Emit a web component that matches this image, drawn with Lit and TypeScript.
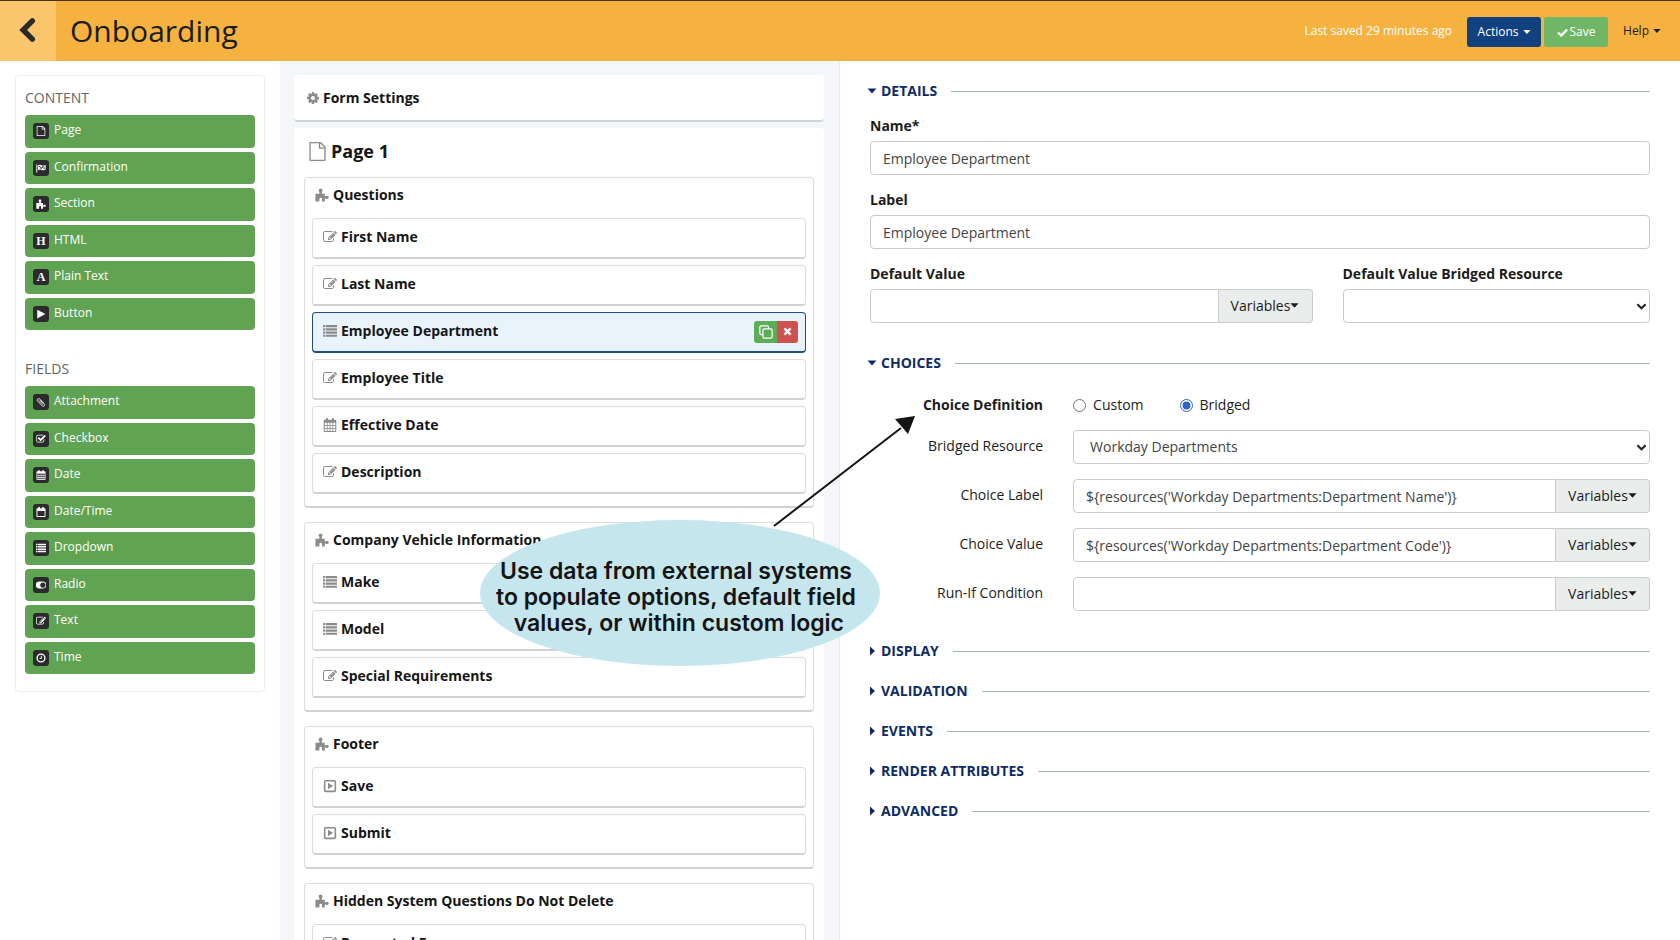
import { LitElement, html, svg, css } from "lit";
import { customElement, property, state } from "lit/decorators.js";
import { classMap } from "lit/directives/class-map.js";

/* Icon artwork: each entry is a viewBox size and its shapes. */
const ICONS: Record<string, { box: number; art: unknown }> = {
  file: {
    box: 1792,
    art: svg`<path d="M1596 380q28 28 48 76t20 88v1152q0 40-28 68t-68 28h-1344q-40 0-68-28t-28-68v-1600q0-40 28-68t68-28h896q40 0 88 20t76 48zm-444-244v376h376q-10-29-22-41l-313-313q-12-12-41-22zm384 1528v-1024h-416q-40 0-68-28t-28-68v-416h-768v1536h1280z"/>`,
  },
  edit: {
    box: 1792,
    art: svg`<path d="M888 1184l116-116-152-152-116 116v56h96v96h56zm440-720q-16-16-33 1l-350 350q-17 17-1 33t33-1l350-350q17-17 1-33zm80 594v190q0 119-84.5 203.5t-203.5 84.5h-832q-119 0-203.5-84.5t-84.5-203.5v-832q0-119 84.5-203.5t203.5-84.5h832q63 0 117 25 15 7 18 23 3 17-9 29l-49 49q-14 14-32 8-23-6-45-6h-832q-66 0-113 47t-47 113v832q0 66 47 113t113 47h832q66 0 113-47t47-113v-126q0-13 9-22l64-64q15-15 35-7t20 29zm-96-738l288 288-672 672h-288v-288zm444 132l-92 92-288-288 92-92q28-28 68-28t68 28l152 152q28 28 28 68t-28 68z"/>`,
  },
  checkbox: {
    box: 1792,
    art: svg`<path d="M1472 930v318q0 119-84.5 203.5t-203.5 84.5h-832q-119 0-203.5-84.5t-84.5-203.5v-832q0-119 84.5-203.5t203.5-84.5h832q63 0 117 25 15 7 18 23 3 17-9 29l-49 49q-10 10-23 10-3 0-9-2-23-6-45-6h-832q-66 0-113 47t-47 113v832q0 66 47 113t113 47h832q66 0 113-47t47-113v-254q0-13 9-22l64-64q10-10 23-10 6 0 12 3 20 8 20 29zm231-489l-814 814q-24 24-57 24t-57-24l-430-430q-24-24-24-57t24-57l110-110q24-24 57-24t57 24l263 263 647-647q24-24 57-24t57 24l110 110q24 24 24 57t-24 57z"/>`,
  },
  cog: {
    box: 1792,
    art: svg`<path d="M1152 896q0-106-75-181t-181-75-181 75-75 181 75 181 181 75 181-75 75-181zm512-109v222q0 12-8 23t-20 13l-185 28q-19 54-39 91 35 50 107 138 10 12 10 25t-9 23q-27 37-99 108t-94 71q-12 0-26-9l-138-108q-44 23-91 38-16 136-29 186-7 28-36 28h-222q-14 0-24.5-8.5t-11.5-21.5l-28-184q-49-16-90-37l-141 107q-10 9-25 9-14 0-25-11-126-114-165-168-7-10-7-23 0-12 8-23 15-21 51-66.5t54-70.5q-27-50-41-99l-183-27q-13-2-21-12.5t-8-23.5v-222q0-12 8-23t19-13l186-28q14-46 39-92-40-57-107-138-10-12-10-24 0-10 9-23 26-36 98.5-107.5t94.5-71.5q13 0 26 10l138 107q44-23 91-38 16-136 29-186 7-28 36-28h222q14 0 24.5 8.5t11.5 21.5l28 184q49 16 90 37l142-107q9-9 24-9 13 0 25 10 129 119 165 170 7 8 7 22 0 12-8 23-15 21-51 66.5t-54 70.5q26 50 41 98l183 28q13 2 21 12.5t8 23.5z"/>`,
  },
  puzzle: {
    box: 16,
    art: svg`<path d="M.500 6.500h4.500V4.300a2.100 2.100 0 1 1 2.800 0v2.200h3.400v3h1.300a1.800 1.800 0 1 1 0 2.400h-1.300V15.500H8v-2.900a1.500 1.500 0 0 0-3 0v2.900H.500z"/>`,
  },
  list: {
    box: 16,
    art: svg`<path d="M0 1.200h2.200v2.400H0zM3 1.200h13v2.400H3zM0 4.900h2.200v2.400H0zM3 4.900h13v2.400H3zM0 8.600h2.200V11H0zM3 8.600h13V11H3zM0 12.300h2.200v2.400H0zM3 12.300h13v2.400H3z"/>`,
  },
  calendar: {
    box: 16,
    art: svg`<path fill-rule="evenodd" d="M2 2h1.500V1.200a1.200 1.200 0 0 1 2.400 0V2h4.200V1.200a1.200 1.200 0 0 1 2.400 0V2H14a1.200 1.200 0 0 1 1.200 1.200v11.600A1.200 1.200 0 0 1 14 16H2a1.200 1.200 0 0 1-1.200-1.200V3.200A1.200 1.200 0 0 1 2 2zM2 5.500v2.400h2.300V5.500zm3.200 0v2.400h2.400V5.500zm3.300 0v2.400h2.300V5.500zm3.200 0v2.400H14V5.500zM2 8.800v2.500h2.300V8.800zm3.200 0v2.500h2.400V8.800zm3.300 0v2.500h2.300V8.800zm3.200 0v2.500H14V8.800zM2 12.200v2.600h2.300v-2.600zm3.200 0v2.600h2.400v-2.600zm3.300 0v2.600h2.300v-2.600zm3.200 0v2.600H14v-2.600z"/>`,
  },
  calendarBlank: {
    box: 16,
    art: svg`<path fill-rule="evenodd" d="M2 2h1.300V1.200a1.400 1.400 0 0 1 2.800 0V2h3.800V1.200a1.400 1.400 0 0 1 2.800 0V2H14a1.200 1.200 0 0 1 1.200 1.200v11.600A1.200 1.200 0 0 1 14 16H2a1.200 1.200 0 0 1-1.200-1.200V3.200A1.200 1.200 0 0 1 2 2zm.300 4.500v8h11.400v-8z"/>`,
  },
  flag: {
    box: 16,
    art: svg`<path d="M.500 2.500h1.500V15H.500z"/><path fill-rule="evenodd" d="M3 3.800c2.500-1.600 4.300-1.300 6.200-.200 2 1.100 3.600.800 6.300-.600v7.500c-2.700 1.500-4.500 1.600-6.500.500C7.200 10 5.500 10 3 11.500zM4.500 5v1.900c.900-.400 1.700-.600 2.500-.600V4.200c-.800 0-1.600.300-2.500.800zM7 6.300v2.300c1 0 1.800.300 2.600.800V7.100C8.700 6.600 7.900 6.300 7 6.300zm2.600-1.200v2c.900.400 1.800.400 2.600.200V5.200c-.900.200-1.700.200-2.600-.100zm2.600 2.200v2.300c.6-.1 1.200-.3 1.900-.6V6.700c-.7.300-1.300.500-1.900.6z"/>`,
  },
  play: { box: 16, art: svg`<path d="M2 1v14L15 8z"/>` },
  playBox: {
    box: 16,
    art: svg`<path fill-rule="evenodd" d="M3 1h10a2 2 0 0 1 2 2v10a2 2 0 0 1-2 2H3a2 2 0 0 1-2-2V3a2 2 0 0 1 2-2zm-.200 1.800v10.400h10.400V2.800z"/><path d="M5.700 4.300v7.400L11.500 8z"/>`,
  },
  clip: {
    box: 16,
    art: svg`<path fill="none" stroke="currentColor" stroke-width="1.400" stroke-linecap="round" d="M11.800 9.500 6.600 3.700C5.300 2.300 3.600 2.300 2.700 3.200s-.9 2.500.4 3.900l6.700 7c1 1 2.400 1.100 3.300.3s.9-2.300 0-3.300L7.200 5.400"/><path fill="none" stroke="currentColor" stroke-width="1.200" stroke-linecap="round" d="M5 5.800l5.600 6"/>`,
  },
  toggle: {
    box: 16,
    art: svg`<path fill-rule="evenodd" d="M5 2.500h6a5.500 5.500 0 0 1 0 11H5a5.500 5.500 0 0 1 0-11zm6 1.300a4.200 4.200 0 1 0 0 8.400 4.200 4.200 0 0 0 0-8.400z"/>`,
  },
  clock: {
    box: 16,
    art: svg`<circle cx="8" cy="8" r="6.200" fill="none" stroke="currentColor" stroke-width="2.200"/><path fill="none" stroke="currentColor" stroke-width="1.500" d="M8.500 4.500V8.700H5.800"/>`,
  },
  back: {
    box: 24,
    art: svg`<path fill="none" stroke="currentColor" stroke-width="5" stroke-linecap="round" stroke-linejoin="miter" d="M16 3.500 7.500 12l8.500 8.500"/>`,
  },
  check: {
    box: 16,
    art: svg`<path fill="none" stroke="currentColor" stroke-width="3.400" d="M1.500 8l4.700 4.500L14.600 3.800"/>`,
  },
  cross: {
    box: 16,
    art: svg`<path fill="none" stroke="currentColor" stroke-width="4.200" d="M2.500 2.500l11 11M13.500 2.500l-11 11"/>`,
  },
  copy: {
    box: 16,
    art: svg`<rect x="1" y="1" width="10" height="10" rx="1.500" fill="none" stroke="currentColor" stroke-width="1.400"/><rect x="4.500" y="4.500" width="10.500" height="10.500" rx="1.500" fill="#5cad56" stroke="currentColor" stroke-width="1.400"/>`,
  },
  chevron: {
    box: 12,
    art: svg`<path fill="none" stroke="currentColor" stroke-width="2.200" d="M1.500 3.500 6 8l4.500-4.500"/>`,
  },
  caretDown: { box: 10, art: svg`<path d="M.500 2.500h9L5 7.500z"/>` },
  caretRight: { box: 10, art: svg`<path d="M3 .500v9L8 5z"/>` },
};

const icon = (name: string) => {
  const { box, art } = ICONS[name];
  return html`<svg class="icon" viewBox="0 0 ${box} ${box}" fill="currentColor" aria-hidden="true">${art}</svg>`;
};

const shared = css`
  * { box-sizing: border-box; }
  button, input, select { font: inherit; color: inherit; margin: 0; }
  button { border: 0; background: none; padding: 0; cursor: pointer; text-align: left; }
  h1, h2, h3, p, ul { margin: 0; padding: 0; font-size: inherit; font-weight: inherit; }
  ul { list-style: none; }
  .icon { display: block; width: 14px; height: 14px; flex: none; }
`;

interface Tool { label: string; icon?: string; letter?: string }

const CONTENT: Tool[] = [
  { label: "Page", icon: "file" },
  { label: "Confirmation", icon: "flag" },
  { label: "Section", icon: "puzzle" },
  { label: "HTML", letter: "H" },
  { label: "Plain Text", letter: "A" },
  { label: "Button", icon: "play" },
];

const FIELDS: Tool[] = [
  { label: "Attachment", icon: "clip" },
  { label: "Checkbox", icon: "checkbox" },
  { label: "Date", icon: "calendar" },
  { label: "Date/Time", icon: "calendarBlank" },
  { label: "Dropdown", icon: "list" },
  { label: "Radio", icon: "toggle" },
  { label: "Text", icon: "edit" },
  { label: "Time", icon: "clock" },
];

@customElement("tool-palette")
export class ToolPalette extends LitElement {
  static styles = [shared, css`
    :host { display: block; padding: 14px 15px; }
    .card { border: 1px solid #ececee; border-radius: 4px; padding: 10px 9px 17px; }
    .title { color: #636363; font-size: 14px; line-height: 24px; margin-bottom: 5px; }
    .tools { display: grid; grid-auto-rows: 1fr; gap: 4px; }
    .content { min-height: 215px; margin-bottom: 27px; }
    .fields { min-height: 288px; }
    .tool {
      display: flex; align-items: center; gap: 5px; width: 100%; height: 100%;
      padding: 0 8px; border-radius: 4px; background: #60a352; color: #fff; font-size: 12px; line-height: 18px;
    }
    .badge {
      display: grid; place-items: center; width: 16px; height: 16px; border-radius: 3px;
      background: #2b2b2d; color: #fff; font: bold 12px/16px "Liberation Serif", serif;
    }
    .badge .icon { width: 10px; height: 10px; }
    .name { padding-bottom: 2px; }
  `];

  private tools(kind: string, list: Tool[]) {
    return html`<ul class="tools ${kind}">
      ${list.map((t) => html`<li>
        <button class="tool" type="button">
          <span class="badge" aria-hidden="true">${t.icon ? icon(t.icon) : t.letter}</span><span class="name">${t.label}</span>
        </button>
      </li>`)}
    </ul>`;
  }

  render() {
    return html`<div class="card">
      <h2 class="title">CONTENT</h2>
      ${this.tools("content", CONTENT)}
      <h2 class="title">FIELDS</h2>
      ${this.tools("fields", FIELDS)}
    </div>`;
  }
}

interface Item { label: string; icon: string }
interface Section { title: string; items: Item[] }

const SECTIONS: Section[] = [
  {
    title: "Questions",
    items: [
      { label: "First Name", icon: "edit" },
      { label: "Last Name", icon: "edit" },
      { label: "Employee Department", icon: "list" },
      { label: "Employee Title", icon: "edit" },
      { label: "Effective Date", icon: "calendar" },
      { label: "Description", icon: "edit" },
    ],
  },
  {
    title: "Company Vehicle Information",
    items: [
      { label: "Make", icon: "list" },
      { label: "Model", icon: "list" },
      { label: "Special Requirements", icon: "edit" },
    ],
  },
  {
    title: "Footer",
    items: [
      { label: "Save", icon: "playBox" },
      { label: "Submit", icon: "playBox" },
    ],
  },
  { title: "Hidden System Questions Do Not Delete", items: [{ label: "Requested For", icon: "edit" }] },
];

@customElement("form-outline")
export class FormOutline extends LitElement {
  @state() private selected = "Employee Department";

  static styles = [shared, css`
    :host {
      display: flex; flex-direction: column; gap: 6px; padding: 14px 15px 0 14px;
      background: #f4f6f9; border-right: 1px solid #e6eaee; font-size: 14px; font-weight: 700; line-height: 20px; color: #161616;
    }
    .icon { color: #8b8b8b; }
    .settings {
      display: flex; align-items: center; gap: 3px; padding: 12px 12px 12px; height: 47px;
      background: #fff; border-radius: 4px; border-bottom: 2px solid #d0d5da;
    }
    .page { flex: 1; background: #fff; border-radius: 4px; padding: 10px 10px 0; }
    .page-title { display: flex; align-items: center; gap: 4px; padding: 0 4px; font-size: 18px; line-height: 26px; margin-bottom: 13px; }
    .page-title .icon { width: 19px; height: 19px; }
    .sections { display: flex; flex-direction: column; gap: 14px; }
    .section { border: 1px solid #dcdcdc; border-bottom: 2px solid #d2d2d2; border-radius: 4px; padding: 7px 7px 12px; }
    .section-title { display: flex; align-items: center; gap: 4px; padding: 0 3px; margin-bottom: 13px; }
    .items { display: flex; flex-direction: column; gap: 6px; }
    .item {
      display: flex; align-items: center; height: 41px; padding: 0 7px 0 10px;
      border: 1px solid #dcdcdc; border-bottom: 2px solid #d2d2d2; border-radius: 4px;
    }
    .item.selected { background: #e9f3fc; border: 1px solid #1f4b86; border-bottom-width: 2px; }
    .pick { display: flex; align-items: center; gap: 4px; flex: 1; padding-bottom: 3px; }
    .actions { display: flex; border-radius: 3px; overflow: hidden; margin-bottom: 1px; }
    .act { display: grid; place-items: center; height: 22px; color: #fff; }
    .act .icon { color: #fff; }
    .copy { width: 23px; background: #5cad56; }
    .remove { width: 21px; background: #cb524e; }
    .remove .icon { width: 9px; height: 9px; }
  `];

  private item(it: Item) {
    const on = it.label === this.selected;
    return html`<li class=${classMap({ item: true, selected: on })}>
      <button class="pick" type="button" @click=${() => (this.selected = it.label)}>${icon(it.icon)}<span>${it.label}</span></button>
      ${on ? html`<div class="actions">
        <button class="act copy" type="button" aria-label="Duplicate">${icon("copy")}</button>
        <button class="act remove" type="button" aria-label="Remove">${icon("cross")}</button>
      </div>` : ""}
    </li>`;
  }

  render() {
    return html`
      <button class="settings" type="button">${icon("cog")}<span>Form Settings</span></button>
      <div class="page">
        <h2 class="page-title">${icon("file")}<span>Page 1</span></h2>
        <div class="sections">
          ${SECTIONS.map((s) => html`<section class="section">
            <h3 class="section-title">${icon("puzzle")}<span>${s.title}</span></h3>
            <ul class="items">${s.items.map((it) => this.item(it))}</ul>
          </section>`)}
        </div>
      </div>`;
  }
}

@customElement("panel-group")
export class PanelGroup extends LitElement {
  @property() heading = "";
  @property({ type: Boolean }) open = false;

  static styles = [shared, css`
    :host { display: block; }
    .head { display: flex; align-items: center; width: 100%; color: #0d2c66; font-weight: 700; font-size: 14px; line-height: 20px; }
    .icon { width: 10px; height: 10px; margin: 0 4px 0 -3px; }
    .rule { flex: 1; height: 1px; background: #93b4d6; margin-left: 14px; }
  `];

  render() {
    return html`<button class="head" type="button" aria-expanded=${this.open} @click=${() => (this.open = !this.open)}>
        ${icon(this.open ? "caretDown" : "caretRight")}<span>${this.heading}</span><span class="rule"></span>
      </button>
      ${this.open ? html`<slot></slot>` : ""}`;
  }
}

@customElement("field-settings")
export class FieldSettings extends LitElement {
  static styles = [shared, css`
    :host { display: flex; flex-direction: column; gap: 20px; padding: 20px 30px; font-size: 14px; line-height: 20px; color: #1c1c1c; }
    .details { display: grid; grid-template-columns: repeat(12, 1fr); column-gap: 30px; row-gap: 15px; padding: 15px 0 10px; }
    .field { display: flex; flex-direction: column; gap: 5px; }
    .full { grid-column: span 12; }
    .wide { grid-column: span 7; }
    .narrow { grid-column: span 5; }
    .label { font-weight: 700; }
    .group, .drop { display: flex; width: 100%; }
    .drop { position: relative; }
    .drop .icon { position: absolute; right: 3px; top: 12px; width: 11px; height: 11px; pointer-events: none; color: #222; }
    .box {
      min-width: 0; width: 100%; height: 34px; padding: 1px 12px 0; border: 1px solid #c9cccb;
      border-radius: 4px; background: #fff; color: #444; outline: none;
    }
    .select { appearance: none; padding: 0 16px; }
    .group .box { flex: 1; border-radius: 4px 0 0 4px; }
    .vars {
      display: flex; align-items: center; justify-content: center; width: 94px; height: 34px; padding-bottom: 1px;
      border: 1px solid #c9cccb; border-left: 0; border-radius: 0 4px 4px 0; background: #eaedec;
    }
    .vars .icon { width: 9px; height: 9px; }
    .choices { display: grid; grid-template-columns: 3fr 10fr; column-gap: 30px; row-gap: 15px; padding: 20px 0 10px; }
    .side { text-align: right; padding-top: 6px; }
    .strong { font-weight: 700; padding-top: 2px; margin-bottom: -2px; }
    .radios { display: flex; align-items: center; gap: 36px; height: 24px; margin-bottom: -2px; }
    .option { display: flex; align-items: center; gap: 7px; }
    .radio { width: 13px; height: 13px; accent-color: #2a66c8; }
  `];

  private withVariables(id: string, value: string) {
    return html`<div class="group">
      <input class="box" id=${id} type="text" .value=${value} />
      <button class="vars" type="button">Variables${icon("caretDown")}</button>
    </div>`;
  }

  private choiceRow(id: string, label: string, value: string) {
    return html`<label class="side" for=${id}>${label}</label>${this.withVariables(id, value)}`;
  }

  render() {
    return html`
      <panel-group heading="DETAILS" open>
        <div class="details">
          <div class="field full">
            <label class="label" for="name">Name*</label>
            <input class="box" id="name" type="text" .value=${"Employee Department"} />
          </div>
          <div class="field full">
            <label class="label" for="label">Label</label>
            <input class="box" id="label" type="text" .value=${"Employee Department"} />
          </div>
          <div class="field wide">
            <label class="label" for="default">Default Value</label>
            ${this.withVariables("default", "")}
          </div>
          <div class="field narrow">
            <label class="label" for="bridge">Default Value Bridged Resource</label>
            <div class="drop"><select class="box select" id="bridge"><option></option></select>${icon("chevron")}</div>
          </div>
        </div>
      </panel-group>
      <panel-group heading="CHOICES" open>
        <div class="choices">
          <span class="side strong" id="definition">Choice Definition</span>
          <div class="radios" role="radiogroup" aria-labelledby="definition">
            <label class="option"><input class="radio" type="radio" name="definition" />Custom</label>
            <label class="option"><input class="radio" type="radio" name="definition" checked />Bridged</label>
          </div>
          <label class="side" for="resource">Bridged Resource</label>
          <div class="drop"><select class="box select" id="resource"><option>Workday Departments</option></select>${icon("chevron")}</div>
          ${this.choiceRow("choice-label", "Choice Label", "${resources('Workday Departments:Department Name')}")}
          ${this.choiceRow("choice-value", "Choice Value", "${resources('Workday Departments:Department Code')}")}
          ${this.choiceRow("run-if", "Run-If Condition", "")}
        </div>
      </panel-group>
      ${["DISPLAY", "VALIDATION", "EVENTS", "RENDER ATTRIBUTES", "ADVANCED"].map((h) => html`<panel-group heading=${h}></panel-group>`)}
    `;
  }
}

@customElement("app-root")
export class AppRoot extends LitElement {
  static styles = [shared, css`
    :host {
      display: flex; flex-direction: column; position: relative; height: 100vh; overflow: hidden;
      background: #fff; font-family: "Open Sans", "Noto Sans", sans-serif; color: #1c1c1c;
    }
    .bar { display: flex; align-items: stretch; height: 61px; border-top: 1px solid #4a3412; background: #f6b241; font-size: 12px; line-height: 18px; }
    .back { display: grid; place-items: center; width: 56px; background: #fbc56c; color: #2a2a2a; }
    .back .icon { width: 26px; height: 26px; margin-bottom: 2px; }
    .title { flex: 1; align-self: center; padding-left: 14px; font-size: 30px; line-height: 42px; }
    .tools { display: flex; align-items: center; padding-right: 19px; }
    .saved { color: #fff; margin-right: 15px; }
    .btn { display: flex; align-items: center; justify-content: center; gap: 4px; height: 30px; margin-top: 2px; border-radius: 3px; color: #fff; }
    .btn .icon, .help .icon { width: 8px; height: 8px; }
    .actions { width: 74px; margin-right: 3px; background: #12417f; }
    .save { width: 64px; margin-right: 15px; background: #6fb765; gap: 2px; }
    .save .icon { width: 11px; height: 11px; }
    .help { display: flex; align-items: center; gap: 4px; }
    .columns { flex: 1; min-height: 0; display: grid; grid-template-columns: 1fr 2fr 3fr; overflow: hidden; }
    .note {
      position: absolute; left: 480px; top: 520px; width: 400px; height: 146px; border-radius: 50%;
      display: grid; place-items: center; background: #c6e6ed; color: #141414; text-align: center;
      font: 600 23px/26px Inter, sans-serif; padding: 8px 8px 0 0; white-space: pre-wrap;
    }
    .arrow { position: absolute; left: 770px; top: 410px; width: 150px; height: 120px; pointer-events: none; }
  `];

  render() {
    return html`
      <header class="bar">
        <button class="back" type="button" aria-label="Back">${icon("back")}</button>
        <h1 class="title">Onboarding</h1>
        <div class="tools">
          <span class="saved">Last saved 29 minutes ago</span>
          <button class="btn actions" type="button">Actions${icon("caretDown")}</button>
          <button class="btn save" type="button">${icon("check")}Save</button>
          <button class="help" type="button">Help${icon("caretDown")}</button>
        </div>
      </header>
      <main class="columns">
        <tool-palette></tool-palette>
        <form-outline></form-outline>
        <field-settings></field-settings>
      </main>
      <p class="note">${"Use data from external systems\nto populate options, default field\n values, or within custom logic"}</p>
      <svg class="arrow" viewBox="0 0 150 120" aria-hidden="true">
        <path d="M4 116 131 18" stroke="#141414" stroke-width="2" fill="none" />
        <path d="M145 6 125 9l13 15z" fill="#141414" />
      </svg>`;
  }
}
